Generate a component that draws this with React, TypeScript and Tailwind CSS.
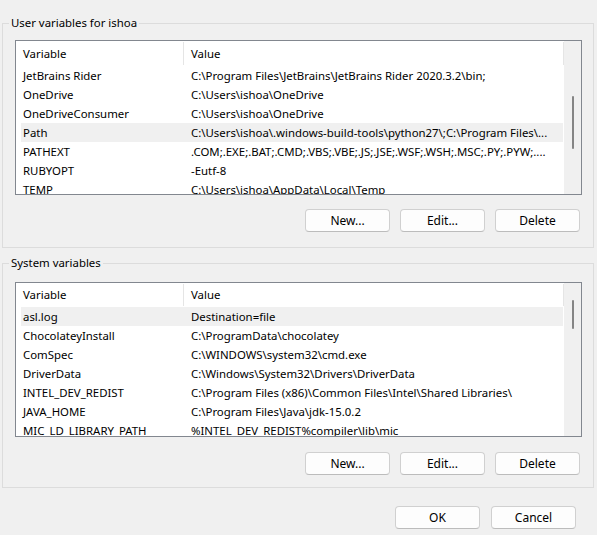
import React from "react";

type Row = { name: string; value: string };

const userVars: Row[] = [
  { name: "JetBrains Rider", value: "C:\\Program Files\\JetBrains\\JetBrains Rider 2020.3.2\\bin;" },
  { name: "OneDrive", value: "C:\\Users\\ishoa\\OneDrive" },
  { name: "OneDriveConsumer", value: "C:\\Users\\ishoa\\OneDrive" },
  { name: "Path", value: "C:\\Users\\ishoa\\.windows-build-tools\\python27\\;C:\\Program Files\\..." },
  { name: "PATHEXT", value: ".COM;.EXE;.BAT;.CMD;.VBS;.VBE;.JS;.JSE;.WSF;.WSH;.MSC;.PY;.PYW;...." },
  { name: "RUBYOPT", value: "-Eutf-8" },
  { name: "TEMP", value: "C:\\Users\\ishoa\\AppData\\Local\\Temp" },
];

const systemVars: Row[] = [
  { name: "asl.log", value: "Destination=file" },
  { name: "ChocolateyInstall", value: "C:\\ProgramData\\chocolatey" },
  { name: "ComSpec", value: "C:\\WINDOWS\\system32\\cmd.exe" },
  { name: "DriverData", value: "C:\\Windows\\System32\\Drivers\\DriverData" },
  { name: "INTEL_DEV_REDIST", value: "C:\\Program Files (x86)\\Common Files\\Intel\\Shared Libraries\\" },
  { name: "JAVA_HOME", value: "C:\\Program Files\\Java\\jdk-15.0.2" },
  { name: "MIC_LD_LIBRARY_PATH", value: "%INTEL_DEV_REDIST%compiler\\lib\\mic" },
];

const WinButton = ({ label }: { label: string }) => (
  <button className="w-[85px] h-[23px] rounded-[4px] border border-[#d0d0d0] border-b-[#bcbcbc] bg-[#fdfdfd] text-[12px] leading-none text-black">
    {label}
  </button>
);

const VarList = ({
  rows,
  selected,
  headerHeight,
  thumbTop,
  thumbHeight,
}: {
  rows: Row[];
  selected: number;
  headerHeight: string;
  thumbTop: string;
  thumbHeight: string;
}) => (
  <div className="h-[155px] border border-[#82878f] bg-white flex overflow-hidden">
    <div className="flex-1 min-w-0">
      <div className={"grid grid-cols-[168px_1fr] " + headerHeight}>
        <div className="flex items-center pl-[7px] border-r border-[#e5e5e5] my-[1px]">Variable</div>
        <div className="flex items-center pl-[7px] border-r border-[#e5e5e5] my-[1px]">Value</div>
      </div>
      {rows.map((r, i) => (
        <div
          key={r.name}
          className={
            "grid grid-cols-[163px_1fr] h-[19px] items-center ml-[5px] mr-[1px] whitespace-nowrap " +
            (i === selected ? "bg-[#f0f0f0]" : "")
          }
        >
          <div className="pl-[2px] overflow-hidden">{r.name}</div>
          <div className="pl-[7px] overflow-hidden">{r.value}</div>
        </div>
      ))}
    </div>
    <div className="w-[17px] bg-[#f0f0f0] flex justify-center">
      <div className={"w-[2px] rounded-full bg-[#858585] " + thumbTop + " " + thumbHeight} />
    </div>
  </div>
);

const Group = ({ title, children, className }: { title: string; children: React.ReactNode; className?: string }) => (
  <fieldset className={"ml-[2px] w-[592px] border border-[#dcdcdc] " + (className ?? "")}>
    <legend className="ml-[6px] px-[2px] leading-[16px]">{title}</legend>
    {children}
  </fieldset>
);

export default function App() {
  return (
    <div
      className="w-[597px] h-[535px] bg-[#f0f0f0] text-[11.4px] text-black pt-[15px] overflow-hidden"
      style={{ fontFamily: '"Segoe UI", "Noto Sans", sans-serif' }}
    >
      <Group title="User variables for ishoa">
        <div className="pt-[9px] pl-[12px] pr-[11px] pb-[15px]">
          <VarList
            rows={userVars}
            selected={3}
            headerHeight="h-[25px]"
            thumbTop="mt-[55px]"
            thumbHeight="h-[53px]"
          />
          <div className="flex justify-end gap-[10px] mt-[14px] pr-[2px]">
            <WinButton label="New..." />
            <WinButton label="Edit..." />
            <WinButton label="Delete" />
          </div>
        </div>
      </Group>
      <Group title="System variables" className="mt-[7px]">
        <div className="pt-[11px] pl-[12px] pr-[11px] pb-[12px]">
          <VarList
            rows={systemVars}
            selected={0}
            headerHeight="h-[24px]"
            thumbTop="mt-[17px]"
            thumbHeight="h-[29px]"
          />
          <div className="flex justify-end gap-[10px] mt-[15px] pr-[2px]">
            <WinButton label="New..." />
            <WinButton label="Edit..." />
            <WinButton label="Delete" />
          </div>
        </div>
      </Group>
      <div className="flex justify-end gap-[11px] mt-[18px] pr-[21px]">
        <WinButton label="OK" />
        <WinButton label="Cancel" />
      </div>
    </div>
  );
}
